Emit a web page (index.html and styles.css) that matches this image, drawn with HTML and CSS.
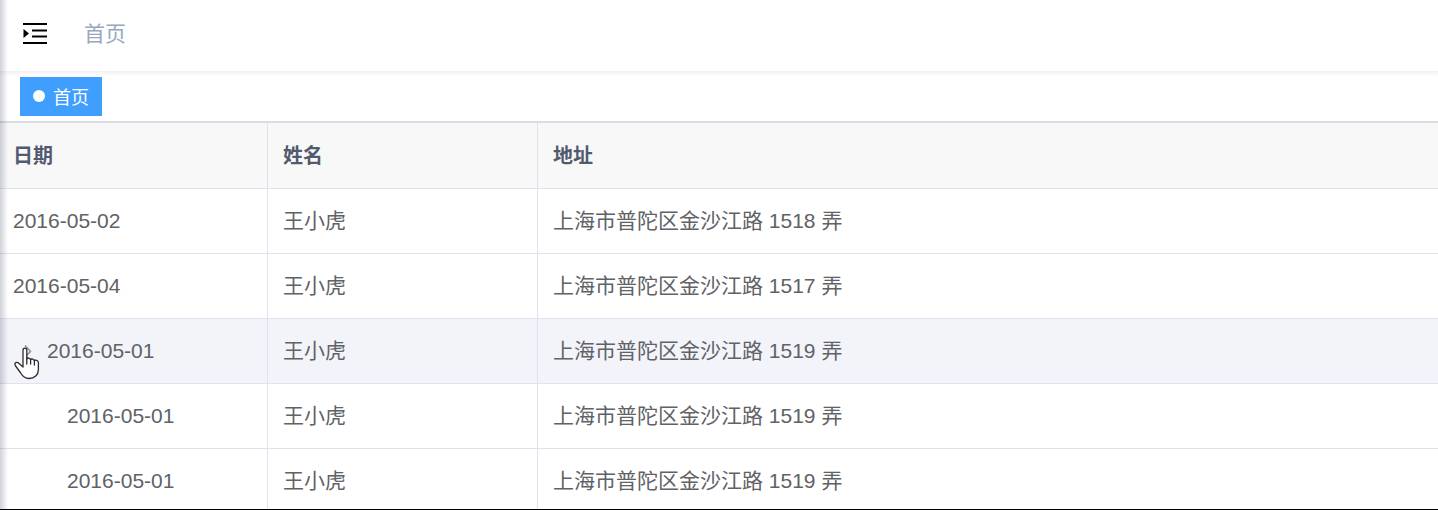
FILE: index.html
```html
<!DOCTYPE html>
<html lang="zh-CN">
  <head>
    <meta charset="UTF-8" />
    <meta name="viewport" content="width=device-width, initial-scale=1.0" />
    <title>首页</title>
    <link rel="stylesheet" href="styles.css">
  </head>
  <body>
    <div class="main-container">
      <header class="navbar">
        <button class="hamburger" type="button" aria-label="菜单">
          <svg width="24" height="22" viewBox="0 0 24 22">
            <path d="M0 1h24M9 7.500h15M9 13.500h15M0 20h24" stroke="#000" stroke-width="2.200" />
            <path d="M.5 6v9l5.500-4.500z" />
          </svg>
        </button>
        <nav class="breadcrumb"><span>首页</span></nav>
      </header>

      <div class="tags-view">
        <a class="tag active" href="#">首页</a>
      </div>

      <main class="app-main">
        <table class="table">
          <colgroup>
            <col class="col-date" />
            <col class="col-name" />
            <col />
          </colgroup>
          <thead>
            <tr>
              <th>日期</th>
              <th>姓名</th>
              <th>地址</th>
            </tr>
          </thead>
          <tbody>
            <tr>
              <td>2016-05-02</td>
              <td>王小虎</td>
              <td>上海市普陀区金沙江路 1518 弄</td>
            </tr>
            <tr>
              <td>2016-05-04</td>
              <td>王小虎</td>
              <td>上海市普陀区金沙江路 1517 弄</td>
            </tr>
            <tr class="hover-row">
              <td>
                <div class="tree-cell">
                  <button class="expand" type="button" aria-label="展开">
                    <svg width="8" height="14" viewBox="0 0 8 14">
                      <path d="M1 1.500L6.500 7.500l-5 5" fill="none" stroke="#8b8d92" stroke-width="1.500" />
                    </svg>
                  </button>
                  <span>2016-05-01</span>
                  <svg class="cursor" width="26" height="33" viewBox="0 0 26 33">
                    <path d="M9 20V3.200C9 .3 12.800.3 12.800 3.200V12c.5-1.500 3.500-1.300 3.800.8.700-1.300 3.500-1 3.800 1 .9-1.200 4-.6 4 2v7c0 5.200-4 8.700-9.400 8.700-4.600 0-6.500-2.300-8.700-6L1.300 18.500c-1.300-2.600 1.600-4.200 3.500-2.300z" fill="#fff" stroke="#2b2b30" stroke-width="1.300" stroke-linejoin="round" />
                    <path d="M12.800 11v6M16.600 12.500V17M20.400 13.500V18" stroke="#2b2b30" stroke-width="1.300" stroke-linecap="round" />
                  </svg>
                </div>
              </td>
              <td>王小虎</td>
              <td>上海市普陀区金沙江路 1519 弄</td>
            </tr>
            <tr class="child-row">
              <td>2016-05-01</td>
              <td>王小虎</td>
              <td>上海市普陀区金沙江路 1519 弄</td>
            </tr>
            <tr class="child-row">
              <td>2016-05-01</td>
              <td>王小虎</td>
              <td>上海市普陀区金沙江路 1519 弄</td>
            </tr>
          </tbody>
        </table>
      </main>
    </div>
  </body>
</html>
```

FILE: styles.css
```css
* {
  box-sizing: border-box;
}

body {
  margin: 0;
  font-family: "Liberation Sans", "Noto Sans CJK SC", sans-serif;
  font-size: 21px;
  color: #606266;
  background-color: #fff;
}

.main-container {
  position: relative;
  display: flex;
  flex-direction: column;
  height: 100vh;
  overflow: hidden;
  border-bottom: 1px solid #000;
}

/* shadow of the sidebar edge */
.main-container::before {
  content: "";
  position: absolute;
  top: 0;
  bottom: 0;
  left: 0;
  width: 8px;
  background: linear-gradient(to right, rgba(40, 50, 80, 0.22), rgba(40, 50, 80, 0));
  z-index: 10;
  pointer-events: none;
}

.navbar {
  display: flex;
  flex-shrink: 0;
  align-items: center;
  gap: 37px;
  height: 71px;
  padding: 0 23px 4px;
}

.hamburger,
.expand {
  display: flex;
  padding: 0;
  border: none;
  background: none;
  cursor: pointer;
}

.breadcrumb {
  line-height: 32px;
  color: #97a8be;
}

.tags-view {
  display: flex;
  flex-shrink: 0;
  align-items: center;
  height: 52px;
  padding: 0 20px;
  border-bottom: 2px solid #d8dce5;
  background: linear-gradient(to bottom, #f0f1f2, #fff 5px);
}

.tag {
  display: flex;
  align-items: center;
  gap: 8px;
  height: 39px;
  padding: 0 13px;
  font-size: 18px;
  color: #fff;
  background-color: #409eff;
  text-decoration: none;
}

.tag.active::before {
  content: "";
  width: 12px;
  height: 12px;
  border-radius: 50%;
  background-color: #fff;
}

.app-main {
  flex: 1;
  min-height: 0;
  overflow: hidden;
}

.table {
  width: 100%;
  table-layout: fixed;
  border-collapse: separate;
  border-spacing: 0;
}

.col-date {
  width: 268px;
}

.col-name {
  width: 270px;
}

.table th,
.table td {
  padding: 16px 15px;
  line-height: 32px;
  text-align: left;
  border-right: 1px solid #dfe3ee;
  border-bottom: 1px solid #dfe3ee;
}

.table th:first-child,
.table td:first-child {
  padding-left: 13px;
}

.table th:last-child,
.table td:last-child {
  border-right: none;
}

.table th {
  padding-top: 17px;
  font-size: 20px;
  font-weight: bold;
  color: #515a6e;
  background-color: #f8f8f9;
}

.hover-row td {
  background-color: #f3f4fa;
}

.table .child-row td:first-child {
  padding-left: 67px;
}

.tree-cell {
  position: relative;
  display: flex;
  align-items: center;
  gap: 15px;
  padding-left: 11px;
}

.cursor {
  position: absolute;
  top: 12px;
  left: 1px;
}
```
